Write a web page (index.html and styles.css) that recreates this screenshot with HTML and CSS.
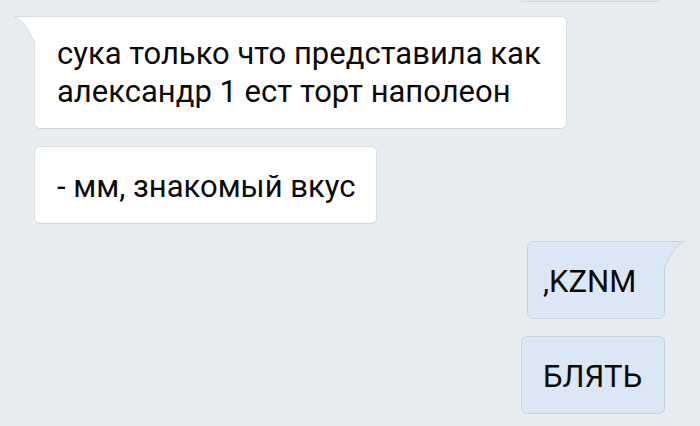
FILE: index.html
```html
<!DOCTYPE html>
<html lang="ru">
<head>
<meta charset="utf-8">
<link rel="stylesheet" href="styles.css">
</head>
<body>
<div class="chat">
  <div class="msg out prev"><div class="bubble">&nbsp;</div></div>
  <div class="msg in first">
    <div class="bubble tailed">
      <svg class="tail tail-in" width="22" height="27" viewBox="0 0 22 27"><path d="M21 0.5 H0.5 Q8 4 14 14 Q18 22 21 26.5 Z" fill="#fff"/><path d="M21 0.5 H0.5 Q8 4 14 14 Q18 22 21 26.5" fill="none" stroke="#d3dae0" stroke-width="1"/></svg>
      <p>сука только что представила как<br>александр 1 ест торт наполеон</p>
    </div>
  </div>
  <div class="msg in">
    <div class="bubble single"><p>- мм, знакомый вкус</p></div>
  </div>
  <div class="msg out first">
    <div class="bubble tailed single">
      <svg class="tail tail-out" width="22" height="27" viewBox="0 0 22 27"><path d="M1 0.5 H21.5 Q14 4 8 14 Q4 22 1 26.5 Z" fill="#dbe7f4"/><path d="M1 0.5 H21.5 Q14 4 8 14 Q4 22 1 26.5" fill="none" stroke="#c4d2e1" stroke-width="1"/></svg>
      <p>,KZNM</p>
    </div>
  </div>
  <div class="msg out">
    <div class="bubble single"><p>БЛЯТЬ</p></div>
  </div>
</div>
</body>
</html>
```
FILE: styles.css
```css
html, body {
  margin: 0;
  padding: 0;
  height: 100%;
}
body {
  background: #e8edf0;
  font-family: Roboto, "Noto Sans", sans-serif;
  color: #0a0a0a;
  overflow: hidden;
}
.chat {
  height: 426px;
  box-sizing: border-box;
  display: flex;
  flex-direction: column;
  justify-content: flex-end;
  padding: 0 35px 12px 34px;
  gap: 17px;
  overflow: hidden;
}
.msg {
  display: flex;
}
.msg.in { justify-content: flex-start; }
.msg.out { justify-content: flex-end; }
.msg.first.in { margin-top: -3px; }
.bubble {
  position: relative;
  background: #fff;
  border: 1px solid #d8dee3;
  border-bottom-color: #cfd6dc;
  border-radius: 6px;
  box-sizing: border-box;
  padding: 0 22px;
  display: flex;
  align-items: center;
  min-height: 78px;
}
.out .bubble {
  background: #dbe7f4;
  border-color: #c4d2e1;
}
.prev .bubble {
  width: 142px;
  min-height: 40px;
  margin-right: 3px;
  background: #e3eaf1;
  border-color: #d0d8df;
}
.bubble p {
  margin: 0;
  font-size: 31px;
  line-height: 38px;
  white-space: nowrap;
}
.bubble.single p {
  padding-top: 4px;
}
.in.first .bubble {
  border-top-left-radius: 0;
  width: 533px;
  height: 113px;
}
.in .bubble { width: 343px; }
.out.first .bubble {
  border-top-right-radius: 0;
  width: 138px;
  padding: 0 0 0 15px;
}
.out .bubble { width: 144px; padding-left: 21px; }
.tail {
  position: absolute;
  top: -1px;
}
.tail-in { left: -21px; }
.tail-out { right: -21px; }
```
